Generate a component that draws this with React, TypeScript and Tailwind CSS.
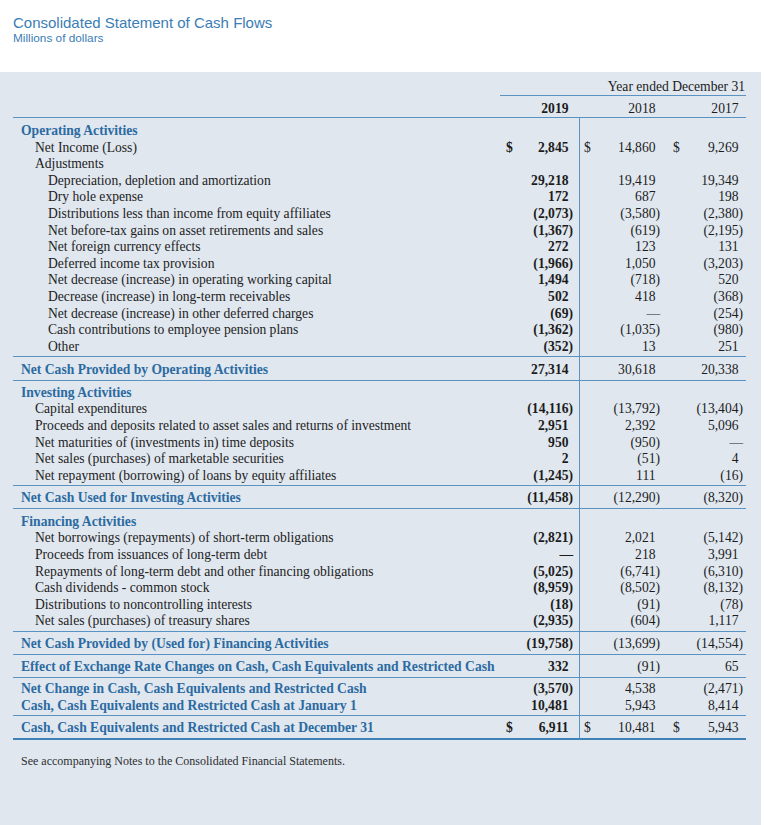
type Vals = [string, string, string];

interface Row {
  label: string;
  level?: 0 | 1 | 2;
  kind?: 'head' | 'item' | 'total';
  v?: Vals;
  dollar?: boolean;
}

interface Block {
  rows: Row[];
  pt: string;
  pb: string;
  single?: boolean;
  thick?: boolean;
}

const blocks: Block[] = [
  {
    pt: 'pt-[5px]',
    pb: 'pb-[0.5px]',
    rows: [
      { label: 'Operating Activities', kind: 'head' },
      { label: 'Net Income (Loss)', level: 1, dollar: true, v: ['2,845', '14,860', '9,269'] },
      { label: 'Adjustments', level: 1 },
      { label: 'Depreciation, depletion and amortization', level: 2, v: ['29,218', '19,419', '19,349'] },
      { label: 'Dry hole expense', level: 2, v: ['172', '687', '198'] },
      { label: 'Distributions less than income from equity affiliates', level: 2, v: ['(2,073)', '(3,580)', '(2,380)'] },
      { label: 'Net before-tax gains on asset retirements and sales', level: 2, v: ['(1,367)', '(619)', '(2,195)'] },
      { label: 'Net foreign currency effects', level: 2, v: ['272', '123', '131'] },
      { label: 'Deferred income tax provision', level: 2, v: ['(1,966)', '1,050', '(3,203)'] },
      { label: 'Net decrease (increase) in operating working capital', level: 2, v: ['1,494', '(718)', '520'] },
      { label: 'Decrease (increase) in long-term receivables', level: 2, v: ['502', '418', '(368)'] },
      { label: 'Net decrease (increase) in other deferred charges', level: 2, v: ['(69)', '—', '(254)'] },
      { label: 'Cash contributions to employee pension plans', level: 2, v: ['(1,362)', '(1,035)', '(980)'] },
      { label: 'Other', level: 2, v: ['(352)', '13', '251'] },
    ],
  },
  {
    pt: 'pt-[5px]',
    pb: 'pb-[2px]',
    single: true,
    rows: [{ label: 'Net Cash Provided by Operating Activities', kind: 'total', v: ['27,314', '30,618', '20,338'] }],
  },
  {
    pt: 'pt-[4px]',
    pb: 'pb-[0.4px]',
    rows: [
      { label: 'Investing Activities', kind: 'head' },
      { label: 'Capital expenditures', level: 1, v: ['(14,116)', '(13,792)', '(13,404)'] },
      { label: 'Proceeds and deposits related to asset sales and returns of investment', level: 1, v: ['2,951', '2,392', '5,096'] },
      { label: 'Net maturities of (investments in) time deposits', level: 1, v: ['950', '(950)', '—'] },
      { label: 'Net sales (purchases) of marketable securities', level: 1, v: ['2', '(51)', '4'] },
      { label: 'Net repayment (borrowing) of loans by equity affiliates', level: 1, v: ['(1,245)', '111', '(16)'] },
    ],
  },
  {
    pt: 'pt-[4px]',
    pb: 'pb-[2px]',
    single: true,
    rows: [{ label: 'Net Cash Used for Investing Activities', kind: 'total', v: ['(11,458)', '(12,290)', '(8,320)'] }],
  },
  {
    pt: 'pt-[5px]',
    pb: 'pb-[0.8px]',
    rows: [
      { label: 'Financing Activities', kind: 'head' },
      { label: 'Net borrowings (repayments) of short-term obligations', level: 1, v: ['(2,821)', '2,021', '(5,142)'] },
      { label: 'Proceeds from issuances of long-term debt', level: 1, v: ['—', '218', '3,991'] },
      { label: 'Repayments of long-term debt and other financing obligations', level: 1, v: ['(5,025)', '(6,741)', '(6,310)'] },
      { label: 'Cash dividends - common stock', level: 1, v: ['(8,959)', '(8,502)', '(8,132)'] },
      { label: 'Distributions to noncontrolling interests', level: 1, v: ['(18)', '(91)', '(78)'] },
      { label: 'Net sales (purchases) of treasury shares', level: 1, v: ['(2,935)', '(604)', '1,117'] },
    ],
  },
  {
    pt: 'pt-[4px]',
    pb: 'pb-[2px]',
    single: true,
    rows: [{ label: 'Net Cash Provided by (Used for) Financing Activities', kind: 'total', v: ['(19,758)', '(13,699)', '(14,554)'] }],
  },
  {
    pt: 'pt-[4px]',
    pb: 'pb-[2px]',
    single: true,
    rows: [
      { label: 'Effect of Exchange Rate Changes on Cash, Cash Equivalents and Restricted Cash', kind: 'total', v: ['332', '(91)', '65'] },
    ],
  },
  {
    pt: 'pt-[3.5px]',
    pb: 'pb-[0.5px]',
    rows: [
      { label: 'Net Change in Cash, Cash Equivalents and Restricted Cash', kind: 'total', v: ['(3,570)', '4,538', '(2,471)'] },
      { label: 'Cash, Cash Equivalents and Restricted Cash at January 1', kind: 'total', v: ['10,481', '5,943', '8,414'] },
    ],
  },
  {
    pt: 'pt-[4.5px]',
    pb: 'pb-[2px]',
    single: true,
    thick: true,
    rows: [
      { label: 'Cash, Cash Equivalents and Restricted Cash at December 31', kind: 'total', dollar: true, v: ['6,911', '10,481', '5,943'] },
    ],
  },
];

// padding per amount column: "$" inset on the left, hanging paren on the right
const colPad = ['pl-[6px] pr-[6px]', 'pl-[4px] pr-[7px]', 'pl-[6px] pr-[3px]'];

function Amount({ value, dollar, bold }: { value?: string; dollar?: boolean; bold?: boolean }) {
  if (!value) return null;
  const hangs = value.endsWith(')') || value === '—';
  return (
    <div className={`flex items-center justify-between ${bold ? 'font-bold' : ''}`}>
      <span>{dollar ? '$' : ''}</span>
      <span className={hangs ? '' : 'pr-[4.5px]'}>{value}</span>
    </div>
  );
}

function labelClass(row: Row) {
  if (row.kind === 'head' || row.kind === 'total') {
    return 'pl-[8px] font-bold text-[#2c6ba2] whitespace-nowrap';
  }
  return `${row.level === 2 ? 'pl-[35px]' : 'pl-[22px]'} text-[#222] whitespace-nowrap`;
}

function BlockRows({ block }: { block: Block }) {
  const last = block.rows.length - 1;
  return (
    <>
      {block.rows.map((row, i) => {
        const edge = [
          i === 0 ? block.pt : '',
          i === last ? block.pb : '',
          i === last ? (block.thick ? 'border-b-2 border-[#3f82b8]' : 'border-b border-[#5a93c1]') : '',
        ].join(' ');
        const lh = block.single ? 'leading-[16px]' : 'leading-[16.6px]';
        return (
          <tr key={row.label} className={lh}>
            <td className={`${labelClass(row)} ${edge}`}>{row.label}</td>
            {[0, 1, 2].map((c) => (
              <td
                key={c}
                className={`${colPad[c]} ${edge} ${c === 1 ? 'border-l border-l-[#5a93c1]' : ''} text-[#1c1c1c]`}
              >
                <Amount value={row.v?.[c]} dollar={row.dollar} bold={c === 0} />
              </td>
            ))}
          </tr>
        );
      })}
    </>
  );
}

export default function App() {
  return (
    <div className="h-[825px] w-[765px] overflow-hidden bg-white">
      <div className="px-[13px] pt-[14px] font-['Liberation_Sans',Arial,sans-serif] text-[#3b7db4]">
        <div className="text-[15px] leading-[18px]">Consolidated Statement of Cash Flows</div>
        <div className="text-[11.8px] leading-[13px]">Millions of dollars</div>
      </div>
      <div className="mt-[27px] h-[753px] w-[761px] bg-[#e0e7ef] pt-[6px] font-['Liberation_Serif','Times_New_Roman',serif] text-[13.6px]">
        <table className="ml-[13px] w-[733px] table-fixed border-separate border-spacing-0">
          <colgroup>
            <col className="w-[487px]" />
            <col className="w-[79px]" />
            <col className="w-[88px]" />
            <col className="w-[79px]" />
          </colgroup>
          <thead>
            <tr className="leading-[16px]">
              <th />
              <th
                colSpan={3}
                className="border-b border-[#5a93c1] pt-[1px] pr-[1px] text-right font-normal text-[#1c1c1c]"
              >
                Year ended December 31
              </th>
            </tr>
            <tr className="leading-[16px]">
              <th className="border-b border-[#5a93c1] pb-[0.5px] pt-[4.5px]" />
              {['2019', '2018', '2017'].map((y, c) => (
                <th
                  key={y}
                  className={`${colPad[c]} border-b border-[#5a93c1] pb-[0.5px] pt-[4.5px] text-right text-[#1c1c1c] ${
                    c === 0 ? 'font-bold' : 'font-normal'
                  }`}
                >
                  <span className="pr-[4.5px]">{y}</span>
                </th>
              ))}
            </tr>
          </thead>
          <tbody>
            {blocks.map((block) => (
              <BlockRows key={block.rows[0].label} block={block} />
            ))}
          </tbody>
        </table>
        <div className="ml-[21px] mt-[14px] text-[12px] leading-[14px] text-[#2e2e2e]">
          See accompanying Notes to the Consolidated Financial Statements.
        </div>
      </div>
    </div>
  );
}
